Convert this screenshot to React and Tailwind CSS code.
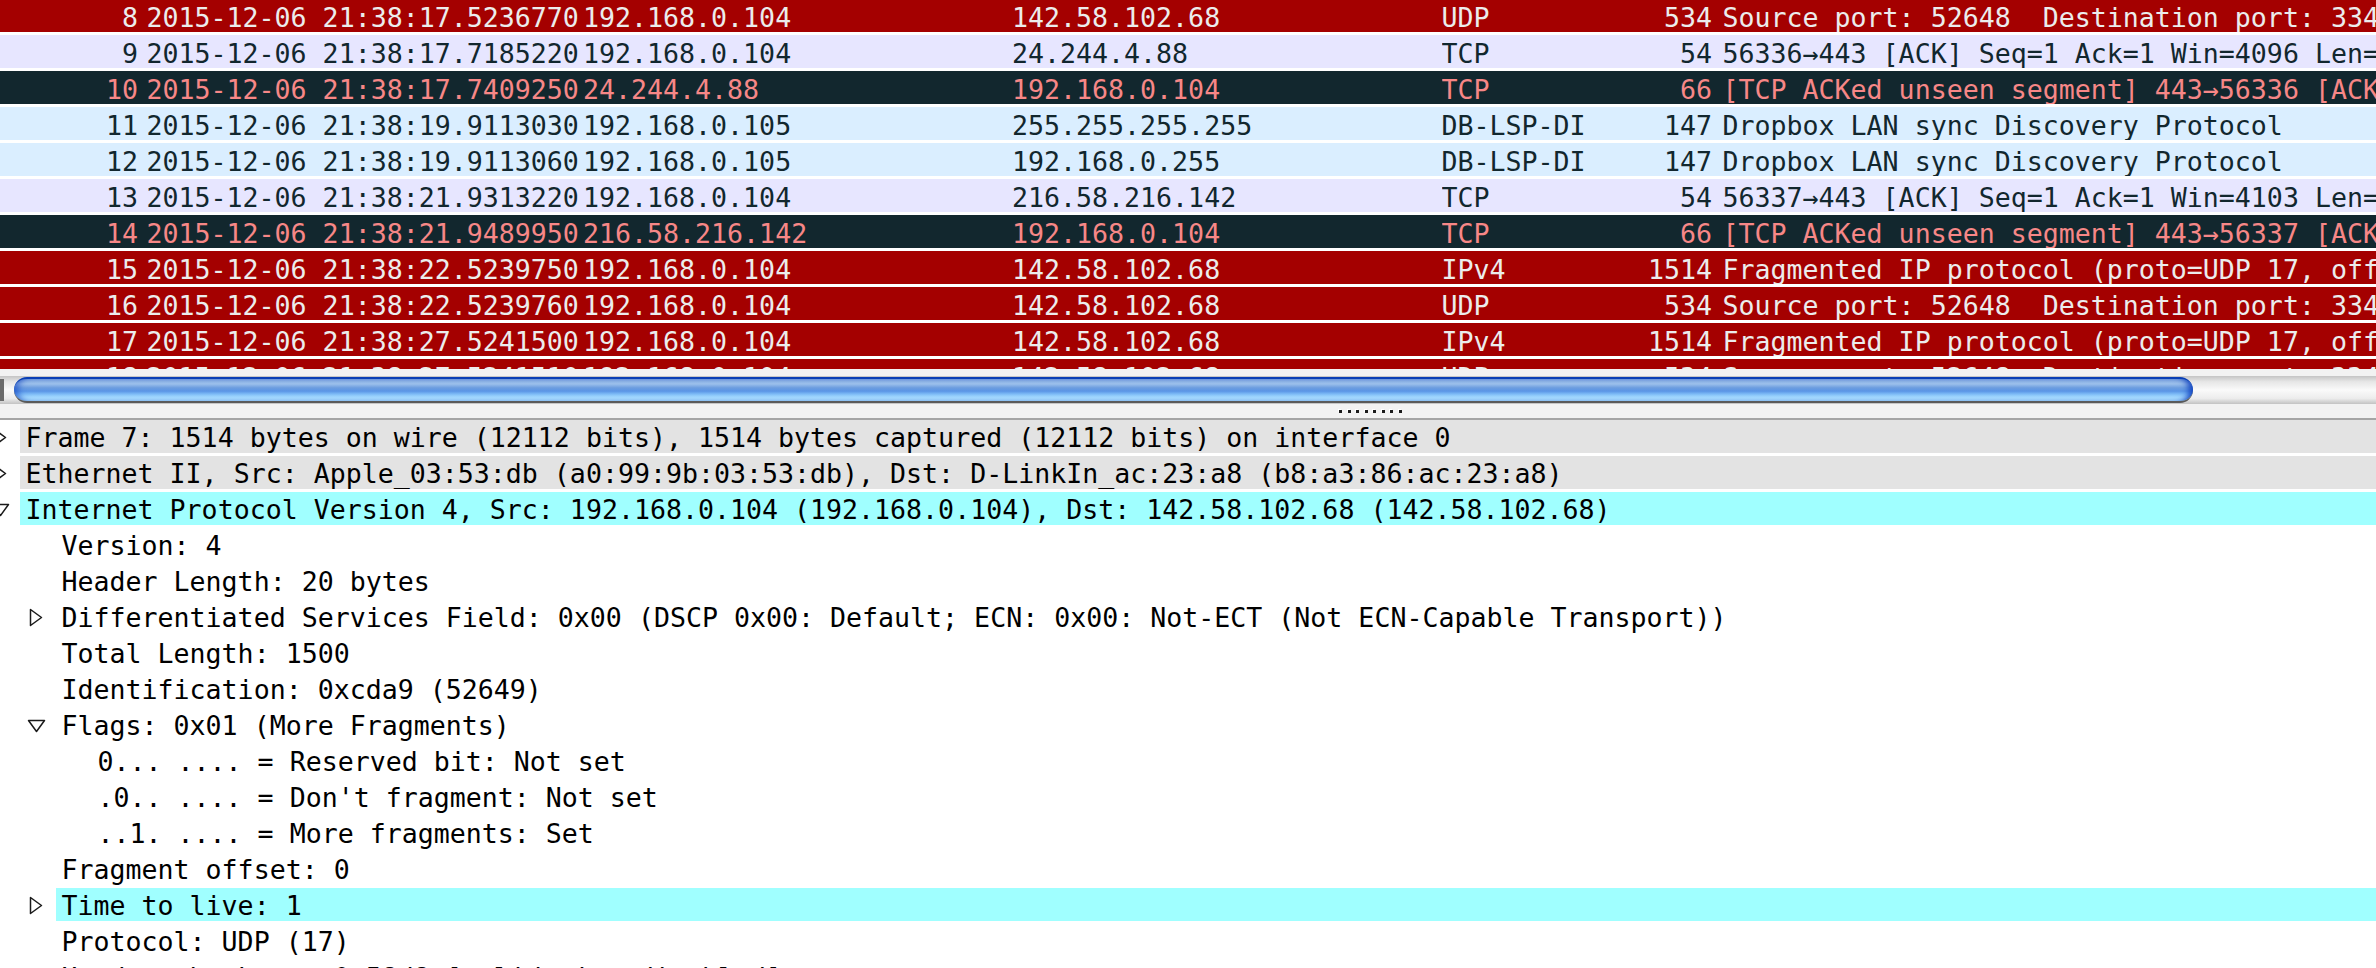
import React from 'react'

const packets = [
  { no: 8, time: '2015-12-06 21:38:17.5236770', src: '192.168.0.104', dst: '142.58.102.68', proto: 'UDP', len: 534, info: 'Source port: 52648  Destination port: 33435', kind: 'ttl' },
  { no: 9, time: '2015-12-06 21:38:17.7185220', src: '192.168.0.104', dst: '24.244.4.88', proto: 'TCP', len: 54, info: '56336→443 [ACK] Seq=1 Ack=1 Win=4096 Len=0', kind: 'tcp' },
  { no: 10, time: '2015-12-06 21:38:17.7409250', src: '24.244.4.88', dst: '192.168.0.104', proto: 'TCP', len: 66, info: '[TCP ACKed unseen segment] 443→56336 [ACK] Seq=1 Ack=2 Win=1047', kind: 'bad' },
  { no: 11, time: '2015-12-06 21:38:19.9113030', src: '192.168.0.105', dst: '255.255.255.255', proto: 'DB-LSP-DISC', len: 147, info: 'Dropbox LAN sync Discovery Protocol', kind: 'udp' },
  { no: 12, time: '2015-12-06 21:38:19.9113060', src: '192.168.0.105', dst: '192.168.0.255', proto: 'DB-LSP-DISC', len: 147, info: 'Dropbox LAN sync Discovery Protocol', kind: 'udp' },
  { no: 13, time: '2015-12-06 21:38:21.9313220', src: '192.168.0.104', dst: '216.58.216.142', proto: 'TCP', len: 54, info: '56337→443 [ACK] Seq=1 Ack=1 Win=4103 Len=0', kind: 'tcp' },
  { no: 14, time: '2015-12-06 21:38:21.9489950', src: '216.58.216.142', dst: '192.168.0.104', proto: 'TCP', len: 66, info: '[TCP ACKed unseen segment] 443→56337 [ACK] Seq=1 Ack=2 Win=342', kind: 'bad' },
  { no: 15, time: '2015-12-06 21:38:22.5239750', src: '192.168.0.104', dst: '142.58.102.68', proto: 'IPv4', len: 1514, info: 'Fragmented IP protocol (proto=UDP 17, off=0, ID=cdaa) [Reassembled in #16]', kind: 'ttl' },
  { no: 16, time: '2015-12-06 21:38:22.5239760', src: '192.168.0.104', dst: '142.58.102.68', proto: 'UDP', len: 534, info: 'Source port: 52648  Destination port: 33436', kind: 'ttl' },
  { no: 17, time: '2015-12-06 21:38:27.5241500', src: '192.168.0.104', dst: '142.58.102.68', proto: 'IPv4', len: 1514, info: 'Fragmented IP protocol (proto=UDP 17, off=0, ID=cdab) [Reassembled in #18]', kind: 'ttl' },
  { no: 18, time: '2015-12-06 21:38:27.5241510', src: '192.168.0.104', dst: '142.58.102.68', proto: 'UDP', len: 534, info: 'Source port: 52648  Destination port: 33437', kind: 'ttl' },
]

const rowColors = {
  ttl: 'bg-[#a40000] text-[#ececec]',
  tcp: 'bg-[#e7e6ff] text-[#12272e]',
  bad: 'bg-[#12272e] text-[#f78787]',
  udp: 'bg-[#daeeff] text-[#12272e]',
}

const details = [
  { level: 1, arrow: 'closed', bg: 'grey', text: 'Frame 7: 1514 bytes on wire (12112 bits), 1514 bytes captured (12112 bits) on interface 0' },
  { level: 1, arrow: 'closed', bg: 'grey', text: 'Ethernet II, Src: Apple_03:53:db (a0:99:9b:03:53:db), Dst: D-LinkIn_ac:23:a8 (b8:a3:86:ac:23:a8)' },
  { level: 1, arrow: 'open', bg: 'cyan', text: 'Internet Protocol Version 4, Src: 192.168.0.104 (192.168.0.104), Dst: 142.58.102.68 (142.58.102.68)' },
  { level: 2, text: 'Version: 4' },
  { level: 2, text: 'Header Length: 20 bytes' },
  { level: 2, arrow: 'closed', text: 'Differentiated Services Field: 0x00 (DSCP 0x00: Default; ECN: 0x00: Not-ECT (Not ECN-Capable Transport))' },
  { level: 2, text: 'Total Length: 1500' },
  { level: 2, text: 'Identification: 0xcda9 (52649)' },
  { level: 2, arrow: 'open', text: 'Flags: 0x01 (More Fragments)' },
  { level: 3, text: '0... .... = Reserved bit: Not set' },
  { level: 3, text: ".0.. .... = Don't fragment: Not set" },
  { level: 3, text: '..1. .... = More fragments: Set' },
  { level: 2, text: 'Fragment offset: 0' },
  { level: 2, arrow: 'closed', bg: 'cyan', text: 'Time to live: 1' },
  { level: 2, text: 'Protocol: UDP (17)' },
  { level: 2, arrow: 'closed', text: 'Header checksum: 0x58d8 [validation disabled]' },
]

const indent = { 1: 'pl-0', 2: 'pl-[36px]', 3: 'pl-[72px]' }
const detailBg = { grey: 'bg-[#e3e3e3]', cyan: 'bg-[#a0ffff]' }

function Expander({ open }) {
  if (open) {
    return (
      <svg width="19" height="14" viewBox="0 0 19 14" className="absolute left-[-9px] top-[11px]">
        <polygon points="1.5,1.5 17.5,1.5 9.5,12.5" fill="none" stroke="#1a1a1a" strokeWidth="1.5" strokeLinejoin="round" />
      </svg>
    )
  }
  return (
    <svg width="14" height="19" viewBox="0 0 14 19" className="absolute left-[-7px] top-[8px]">
      <polygon points="1.5,1.5 12.5,9.5 1.5,17.5" fill="none" stroke="#1a1a1a" strokeWidth="1.5" strokeLinejoin="round" />
    </svg>
  )
}

function PacketRow({ p }) {
  return (
    <div className="h-[36px] border-b-[3px] border-white">
      <div className={`flex h-[33px] pt-[4px] leading-[29px] whitespace-pre ${rowColors[p.kind]}`}>
        <div className="w-[138px] shrink-0 text-right">{p.no}</div>
        <div className="w-[445px] shrink-0 overflow-hidden pl-[8.5px]">{p.time}</div>
        <div className="w-[429px] shrink-0 overflow-hidden">{p.src}</div>
        <div className="w-[429.5px] shrink-0 overflow-hidden">{p.dst}</div>
        <div className="w-[144px] shrink-0 overflow-hidden">{p.proto}</div>
        <div className="w-[126.5px] shrink-0 text-right">{p.len}</div>
        <div className="min-w-0 flex-1 overflow-hidden pl-[10.5px]">{p.info}</div>
      </div>
    </div>
  )
}

function DetailRow({ d }) {
  return (
    <div className={`flex h-[36px] ${indent[d.level]}`}>
      <div className="relative w-[20px] shrink-0">
        {d.arrow && <Expander open={d.arrow === 'open'} />}
      </div>
      <div className={`h-[33px] min-w-0 flex-1 overflow-hidden whitespace-pre pl-[5.5px] pt-[3px] leading-[29px] text-black ${d.bg ? detailBg[d.bg] : ''}`}>
        {d.text}
      </div>
    </div>
  )
}

export default function App() {
  return (
    <div className="h-[968px] w-[2376px] overflow-hidden bg-white font-['DejaVu_Sans_Mono',monospace] text-[26.6px]">
      {/* packet list */}
      <div className="-mt-px h-[370px] overflow-hidden">
        {packets.map((p) => (
          <PacketRow key={p.no} p={p} />
        ))}
      </div>

      {/* horizontal scrollbar */}
      <div className="h-[7px] bg-[#f2f2f2]" />
      <div className="flex h-[28px] items-center bg-[linear-gradient(to_bottom,#c4c4c4_0%,#e6e6e6_20%,#fafafa_50%,#ececec_80%,#c2c2c2_100%)]">
        <div className="h-[22px] w-[4px] shrink-0 bg-[#6b6b6b]" />
        <div className="ml-[10px] h-[26px] w-[2179px] shrink-0 rounded-full border-t-2 border-b-2 border-t-[#0a3fb5] border-b-[#5a5a5a] bg-[linear-gradient(to_bottom,#8ab0e2_0%,#9dc1ec_22%,#6c9ddf_40%,#5a95e6_55%,#7cbaf6_68%,#a2d9ff_82%,#b3e5ff_100%)] shadow-[inset_-7px_0_6px_-3px_rgba(10,60,190,0.9),inset_7px_0_6px_-3px_rgba(10,60,190,0.6)]" />
      </div>
      <div className="flex h-[14px] items-start bg-[#f2f2f2] pt-[6px]">
        <div className="ml-[1339px] flex gap-[5.5px]">
          {[0, 1, 2, 3, 4, 5, 6, 7].map((i) => (
            <div key={i} className="h-[3px] w-[3px] bg-[#1a1a1a] shadow-[-1px_-1px_0_#ffffff]" />
          ))}
        </div>
      </div>
      <div className="h-[2px] bg-[#a5a5a5]" />

      {/* packet details */}
      <div>
        {details.map((d, i) => (
          <DetailRow key={i} d={d} />
        ))}
      </div>
    </div>
  )
}
